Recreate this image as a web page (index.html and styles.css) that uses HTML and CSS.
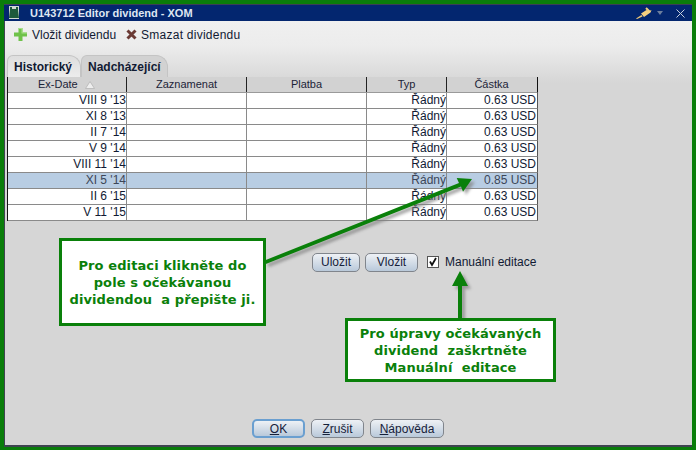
FILE: index.html
```html
<!DOCTYPE html>
<html lang="cs">
<head>
<meta charset="utf-8">
<title>Editor dividend</title>
<link rel="stylesheet" href="styles.css">
</head>
<body>
<div class="window">
  <header class="titlebar">
    <svg class="appicon" width="10" height="13" viewBox="0 0 10 13"><rect width="10" height="13" fill="#cfd8d2"/><path d="M1 1h2v2h4V1h2v3l1 8H0l1-8z" fill="#1d5a3c"/></svg>
    <span class="title">U143712 Editor dividend - XOM</span>
    <svg class="pin" width="16" height="12" viewBox="0 0 16 12"><path d="M0 11.500L5.500 8l1 1.500L1 12z" fill="#f0c878"/><path d="M5 6.500L10.500 3l2.500 1 2.500-1-1 2.500L8 10z" fill="#f4cf80"/><path d="M10 1l4 4" stroke="#f4cf80" stroke-width="2"/></svg>
    <svg class="caret" width="6" height="4" viewBox="0 0 6 4"><path d="M0 0h6L3 4z" fill="#6d7f9e"/></svg>
    <svg class="close" width="9" height="9" viewBox="0 0 9 9"><path d="M.5.500l8 8M8.500.500l-8 8" stroke="#c5cfdd" stroke-width="1"/></svg>
  </header>
  <div class="body">
    <div class="toolbar">
      <span class="tool"><svg width="13" height="13" viewBox="0 0 13 13"><path d="M4.500 0h4v4.500H13v4H8.500V13h-4V8.500H0v-4h4.500z" fill="#6fc24a"/><path d="M4.500 0h4v4.500H13v1H7.500V1h-3z" fill="#a8e08a"/></svg>Vložit dividendu</span>
      <span class="tool wide"><svg width="11" height="11" viewBox="0 0 11 11"><path d="M1.500 1.500l8 8M9.500 1.500l-8 8" stroke="#6b3a34" stroke-width="3"/></svg>Smazat dividendu</span>
    </div>
    <div class="tabs">
      <span class="tab active">Historický</span>
      <span class="tab">Nadcházející</span>
    </div>
    <div class="table">
      <div class="row head">
        <span class="cell center first">Ex-Date<svg class="sort" width="10" height="8" viewBox="0 0 10 8"><path d="M5 .5l4.500 7H.5z" fill="#eeeeee" stroke="#b5b5b5" stroke-width=".8"/></svg></span><span class="cell center">Zaznamenat</span><span class="cell center">Platba</span><span class="cell center">Typ</span><span class="cell center">Částka</span>
      </div>
      <div class="row"><span class="cell">VIII 9 '13</span><span class="cell"></span><span class="cell"></span><span class="cell">Řádný</span><span class="cell">0.63 USD</span></div>
      <div class="row"><span class="cell">XI 8 '13</span><span class="cell"></span><span class="cell"></span><span class="cell">Řádný</span><span class="cell">0.63 USD</span></div>
      <div class="row"><span class="cell">II 7 '14</span><span class="cell"></span><span class="cell"></span><span class="cell">Řádný</span><span class="cell">0.63 USD</span></div>
      <div class="row"><span class="cell">V 9 '14</span><span class="cell"></span><span class="cell"></span><span class="cell">Řádný</span><span class="cell">0.63 USD</span></div>
      <div class="row"><span class="cell">VIII 11 '14</span><span class="cell"></span><span class="cell"></span><span class="cell">Řádný</span><span class="cell">0.63 USD</span></div>
      <div class="row selected"><span class="cell">XI 5 '14</span><span class="cell"></span><span class="cell"></span><span class="cell">Řádný</span><span class="cell">0.85 USD</span></div>
      <div class="row"><span class="cell">II 6 '15</span><span class="cell"></span><span class="cell"></span><span class="cell">Řádný</span><span class="cell">0.63 USD</span></div>
      <div class="row"><span class="cell">V 11 '15</span><span class="cell"></span><span class="cell"></span><span class="cell">Řádný</span><span class="cell">0.63 USD</span></div>
    </div>
    <div class="actions">
      <button class="btn save">Uložit</button>
      <button class="btn insert">Vložit</button>
      <span class="check"><span class="box"><svg width="10" height="10" viewBox="0 0 10 10"><path d="M2 4.500l2 3.500L8 1" fill="none" stroke="#111" stroke-width="1.800"/></svg></span>Manuální editace</span>
    </div>
    <div class="footer">
      <button class="btn ok"><u>O</u>K</button>
      <button class="btn cancel"><u>Z</u>rušit</button>
      <button class="btn help"><u>N</u>ápověda</button>
    </div>
  </div>
  <svg class="arrows" width="696" height="450" viewBox="0 0 696 450">
    <defs><filter id="sh" x="-10%" y="-30%" width="120%" height="160%"><feGaussianBlur stdDeviation="1.500"/></filter></defs>
    <g fill="#808080" opacity=".7" filter="url(#sh)" transform="translate(3 3)">
      <path d="M264.500 260.500L459 183l-2.300-5 15.300 1-9 12.700-2-5.200L265.800 264z"/>
      <path d="M458 322V286h-6l8-15 8 15h-6v36z"/>
    </g>
    <g fill="#0a800a">
      <path d="M264.500 260.500L459 183l-2.300-5 15.300 1-9 12.700-2-5.200L265.800 264z"/>
      <path d="M458 322V286h-6l8-15 8 15h-6v36z"/>
    </g>
  </svg>
  <div class="callout one">Pro editaci klikněte do<br>pole s očekávanou<br>dividendou&nbsp; a přepište ji.</div>
  <div class="callout two">Pro úpravy očekávaných<br>dividend&nbsp; zaškrtněte<br>Manuální&nbsp; editace</div>
</div>
</body>
</html>
```
FILE: styles.css
```css
html, body { margin: 0; padding: 0; }
body { width: 696px; height: 450px; overflow: hidden; font-family: "Liberation Sans", Arial, sans-serif; font-size: 12px; color: #111a33; }
.window { position: relative; box-sizing: border-box; width: 696px; height: 450px; border: 4px solid #0a7d0a; border-bottom-width: 3px; background: #d6d6d6; display: flex; flex-direction: column; box-shadow: inset 1px 0 #3f4450; }
.titlebar { height: 17px; flex: none; background: #03266f; border-top: 1px solid #3a3f55; box-sizing: border-box; display: flex; align-items: center; padding: 0 7px 0 5px; color: #e8edf5; }
.appicon { flex: none; margin-top: -2px; }
.title { margin-left: 11px; font-weight: bold; font-size: 11px; flex: 1; color: #dfe6f2; }
.pin { margin-right: 5px; }
.caret { margin-right: 13px; }
.body { flex: 1; display: flex; flex-direction: column; background: linear-gradient(#f0f0f0 0, #ececec 25px, #d6d6d6 62px); border-bottom: 2px solid #3f4450; margin-left: 1px; min-height: 0; }
.toolbar { display: flex; gap: 10px; padding: 6px 0 0 9px; height: 28px; box-sizing: border-box; flex: none; }
.tool { display: flex; align-items: center; gap: 5px; height: 15px; font-size: 12px; }
.tool svg { flex: none; }
.tool.wide { gap: 4px; letter-spacing: .25px; }
.tabs { display: flex; padding-left: 2px; height: 22px; flex: none; margin-top: 6px; }
.tab { font-weight: bold; font-size: 12px; display: flex; align-items: center; box-sizing: border-box; border: 1px solid #c4c4c4; border-bottom: 0; border-radius: 6px 12px 0 0; background: #d2d2d2; padding: 1px 0 0 6px; width: 87px; }
.tab.active { background: linear-gradient(#dedede, #ececec); width: 74px; }
.table { margin-left: 2px; width: 530px; border-left: 1px solid #111; flex: none; background: #fff; }
.row { display: grid; grid-template-columns: 119px 120px 120px 80px 89px; height: 16px; background: #fff; border-bottom: 1px solid #8a8a8a; box-sizing: border-box; border-right: 1px solid #555; }
.row.selected { background: #b8cde3; color: #3c4658; }
.row.head { background: #d2d2d2; border-bottom-color: #9a9a9a; color: #1c2438; border-right-color: #111; font-size: 11px; }
.cell { text-align: right; line-height: 15px; height: 15px; border-right: 1px solid #8a8a8a; box-sizing: border-box; overflow: hidden; white-space: nowrap; }
.cell:last-child { border-right: 0; }
.head .cell { border-right: 1px solid #222; }
.head .cell:last-child { border-right: 0; }
.center { text-align: center; }
.first { display: flex; align-items: center; gap: 7px; padding-left: 30px; }
.sort { flex: none; }
.actions { display: flex; align-items: center; height: 20px; flex: none; margin-top: 31px; padding-left: 307px; }
.btn { font: 12px "Liberation Sans", Arial, sans-serif; color: #16213a; height: 19px; box-sizing: border-box; padding: 0; border: 1px solid #80858c; border-radius: 5px; background: linear-gradient(#eef1f5, #b9c9da); }
.save { width: 48px; }
.insert { width: 53px; margin-left: 5px; }
.check { display: flex; align-items: center; margin-left: 9px; }
.box { width: 10px; height: 10px; background: #fff; border: 1px solid #555; display: block; margin-right: 6px; }
.box svg { display: block; }
.footer { display: flex; gap: 6px; margin-top: auto; padding: 0 0 7px 247px; flex: none; }
.ok { width: 53px; border: 2px solid #6a9fd0; }
.cancel { width: 53px; }
.help { width: 74px; }
.arrows { position: absolute; left: -4px; top: -4px; pointer-events: none; }
.callout { position: absolute; box-sizing: border-box; background: #fff; border: 3px solid #0a800a; color: #0a800a; font: bold 13px/17px "DejaVu Sans", sans-serif; text-align: center; display: flex; align-items: center; justify-content: center; letter-spacing: .1px; }
.one { left: 55px; top: 234px; width: 207px; height: 88px; }
.two { left: 341px; top: 314px; width: 211px; height: 64px; }
```
